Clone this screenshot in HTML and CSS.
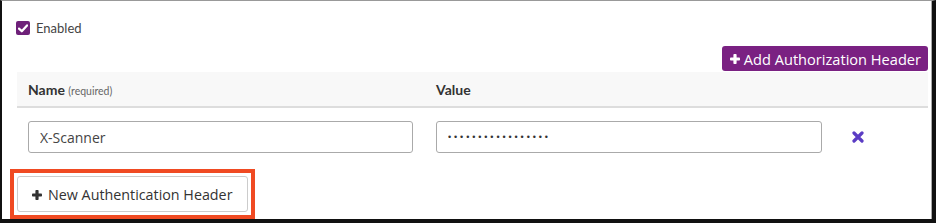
FILE: index.html
```html
<!DOCTYPE html>
<html lang="en">
<head>
    <meta charset="UTF-8">
    <title>Authentication Headers</title>
    <link rel="stylesheet" href="styles.css">
</head>
<body>

    <div class="frame">
        <!-- Enabled toggle -->
        <label class="enabled">
            <span class="check">
                <svg width="10" height="9" viewBox="0 0 10 9"><path d="M1 4.6 L3.8 7.3 L9 1.4" fill="none" stroke="#fff" stroke-width="2.2" stroke-linecap="round" stroke-linejoin="round"/></svg>
            </span>
            Enabled
        </label>

        <div class="toolbar">
            <button class="btn-purple">
                <svg class="plus" width="10" height="10" viewBox="0 0 10 10"><rect x="3.4" y="0" width="3.2" height="10" rx="0.8" fill="#fff"/><rect x="0" y="3.4" width="10" height="3.2" rx="0.8" fill="#fff"/></svg>
                Add Authorization Header
            </button>
        </div>

        <!-- Headers table -->
        <div class="headers">
            <div class="head-row">
                <div class="cell">Name <small>(required)</small></div>
                <div class="cell">Value</div>
                <div class="cell"></div>
            </div>
            <div class="row">
                <div class="cell"><input type="text" value="X-Scanner"></div>
                <div class="cell"><input type="password" value="abcdefghijklmnopq"></div>
                <div class="cell remove">
                    <svg width="12" height="12" viewBox="0 0 12 12"><path d="M2 2 L10 10 M10 2 L2 10" stroke="#5b3cc4" stroke-width="3.2" stroke-linecap="round"/></svg>
                </div>
            </div>
        </div>

        <div class="highlight">
            <button class="btn-default">
                <svg class="plus" width="10" height="10" viewBox="0 0 10 10"><rect x="3.4" y="0" width="3.2" height="10" rx="0.8" fill="#333"/><rect x="0" y="3.4" width="10" height="3.2" rx="0.8" fill="#333"/></svg>
                New Authentication Header
            </button>
        </div>
    </div>

</body>
</html>
```

FILE: styles.css
```css
body {
    margin: 0;
    padding: 0;
    background: #fff;
    font-family: "Open Sans", Arial, sans-serif;
}

/* Outer screenshot frame */
.frame {
    width: 936px;
    height: 223px;
    box-sizing: border-box;
    border-left: 2px solid #111;
    border-top: 1px solid #999;
    border-right: 4px solid #111;
    border-bottom: 4px solid #111;
    box-shadow: inset -1px 0 0 #aaa;
    overflow: hidden;
}

/* Enabled checkbox */
.enabled {
    display: flex;
    align-items: center;
    gap: 6px;
    margin: 19px 0 0 14px;
    font-family: Lato, "Open Sans", sans-serif;
    font-size: 13px;
    color: #444;
    height: 16px;
}

.check {
    width: 14px;
    height: 14px;
    border-radius: 2px;
    background: #6e2079;
    display: flex;
    align-items: center;
    justify-content: center;
}

/* Toolbar */
.toolbar {
    display: flex;
    justify-content: flex-end;
    margin: 10px 4px 0 0;
}

button {
    font-family: "Open Sans", Arial, sans-serif;
    font-size: 14px;
    cursor: pointer;
    display: flex;
    align-items: center;
    gap: 4px;
}

.btn-purple {
    background: #7a2182;
    color: #fff;
    border: none;
    border-radius: 3px;
    height: 25px;
    font-size: 14.6px;
    padding: 0 7px 0 8px;
}

.plus {
    margin-top: 1px;
}

/* Headers table */
.headers {
    margin: 1px 4px 0 15px;
}

.head-row,
.row {
    display: grid;
    grid-template-columns: 408px 408px 1fr;
}

.head-row {
    background: #f8f8f8;
    border-bottom: 2px solid #ddd;
    height: 34px;
    align-items: center;
    font-family: Lato, "Open Sans", sans-serif;
    font-weight: bold;
    font-size: 14px;
    color: #333;
}

.head-row small {
    font-weight: normal;
    font-size: 10.5px;
    color: #666;
}

.cell {
    padding-left: 11px;
}

.row {
    padding-top: 13px;
    align-items: center;
}

.row input {
    width: 385px;
    height: 32px;
    box-sizing: border-box;
    border: 1px solid #aaa;
    border-radius: 3px;
    padding: 0 11px;
    font-family: "Open Sans", Arial, sans-serif;
    font-size: 14px;
    color: #444;
}

.row input[type="password"] {
    width: 386px;
    font-family: Arial, sans-serif;
    font-size: 9px;
    letter-spacing: 2.9px;
    color: #333;
}

.remove {
    padding-left: 19px;
    display: flex;
    align-items: center;
}

/* Highlighted new header button */
.highlight {
    display: inline-block;
    margin: 16px 0 0 8px;
    border: 4px solid #f04a22;
    padding: 3px;
}

.btn-default {
    background: #fff;
    color: #333;
    border: 1px solid #ccc;
    border-radius: 3px;
    height: 36px;
    width: 231px;
    font-size: 14.3px;
    padding: 0 0 0 14px;
    gap: 6px;
}
```
